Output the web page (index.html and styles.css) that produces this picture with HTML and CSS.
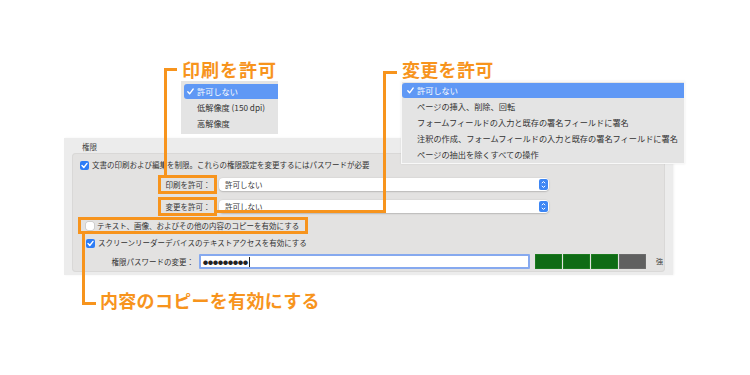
FILE: index.html
```html
<!DOCTYPE html>
<html lang="ja">
<head>
<meta charset="utf-8">
<title>権限</title>
<link rel="stylesheet" href="styles.css">
</head>
<body>
<div class="stage">
  <section class="panel">
    <div class="panel-title">権限</div>
    <div class="group">
      <div class="row row-restrict">
        <span class="cb"><svg width="9" height="9" viewBox="0 0 9 9"><rect width="9" height="9" rx="2" fill="#2c7cf6"/><path d="M2 4.6 L3.8 6.5 L7 2.4" stroke="#fff" stroke-width="1.4" fill="none" stroke-linecap="round" stroke-linejoin="round"/></svg></span>
        <span class="txt">文書の印刷および編集を制限。これらの権限設定を変更するにはパスワードが必要</span>
      </div>
      <div class="row row-print">
        <span class="field-label hl">印刷を許可：</span>
        <div class="select"><span>許可しない</span><svg class="stepper" width="9" height="11" viewBox="0 0 9 11"><rect width="9" height="11" rx="2" fill="#3d86f4"/><path d="M2.8 4.2 L4.5 2.6 L6.2 4.2 M2.8 6.8 L4.5 8.4 L6.2 6.8" stroke="#fff" stroke-width="1" fill="none"/></svg></div>
      </div>
      <div class="row row-change">
        <span class="field-label hl">変更を許可：</span>
        <div class="select"><span>許可しない</span><svg class="stepper" width="9" height="11" viewBox="0 0 9 11"><rect width="9" height="11" rx="2" fill="#3d86f4"/><path d="M2.8 4.2 L4.5 2.6 L6.2 4.2 M2.8 6.8 L4.5 8.4 L6.2 6.8" stroke="#fff" stroke-width="1" fill="none"/></svg></div>
      </div>
      <div class="row row-copy">
        <span class="copy-opt hl">
          <span class="cb cb-off"></span>
          <span class="txt">テキスト、画像、およびその他の内容のコピーを有効にする</span>
        </span>
      </div>
      <div class="row row-reader">
        <span class="cb"><svg width="9" height="9" viewBox="0 0 9 9"><rect width="9" height="9" rx="2" fill="#2c7cf6"/><path d="M2 4.6 L3.8 6.5 L7 2.4" stroke="#fff" stroke-width="1.4" fill="none" stroke-linecap="round" stroke-linejoin="round"/></svg></span>
        <span class="txt">スクリーンリーダーデバイスのテキストアクセスを有効にする</span>
      </div>
      <div class="row row-pass">
        <span class="pass-label">権限パスワードの変更：</span>
        <div class="pass-input"><span class="dots">●●●●●●●●●</span><span class="caret"></span></div>
        <div class="meter">
          <span class="bar on"></span><span class="bar on"></span><span class="bar on"></span><span class="bar off"></span>
        </div>
        <span class="strength">強</span>
      </div>
    </div>
  </section>

  <div class="menu menu-print">
    <div class="mi sel"><svg class="chk" width="7" height="7" viewBox="0 0 7 7"><path d="M0.8 3.8 L2.6 5.8 L6.2 1" stroke="#fff" stroke-width="1.3" fill="none" stroke-linecap="round" stroke-linejoin="round"/></svg>許可しない</div>
    <div class="mi">低解像度 (150 dpi)</div>
    <div class="mi">高解像度</div>
  </div>

  <div class="menu menu-change">
    <div class="mi sel"><svg class="chk" width="7" height="7" viewBox="0 0 7 7"><path d="M0.8 3.8 L2.6 5.8 L6.2 1" stroke="#fff" stroke-width="1.3" fill="none" stroke-linecap="round" stroke-linejoin="round"/></svg>許可しない</div>
    <div class="mi">ページの挿入、削除、回転</div>
    <div class="mi">フォームフィールドの入力と既存の署名フィールドに署名</div>
    <div class="mi">注釈の作成、フォームフィールドの入力と既存の署名フィールドに署名</div>
    <div class="mi">ページの抽出を除くすべての操作</div>
  </div>

  <div class="ln ln-print"></div>
  <div class="ln ln-change-top"></div>
  <div class="ln ln-change-bottom"></div>
  <div class="ln ln-copy"></div>

  <div class="callout callout-print">印刷を許可</div>
  <div class="callout callout-change">変更を許可</div>
  <div class="callout callout-copy">内容のコピーを有効にする</div>
</div>
</body>
</html>
```

FILE: styles.css
```css
* { box-sizing: border-box; }
html, body { margin: 0; padding: 0; background: #fff; }
body {
  font-family: "Noto Sans CJK JP", "Noto Sans", sans-serif;
  color: #333;
}
.stage {
  position: relative;
  width: 750px;
  height: 375px;
  overflow: hidden;
  padding: 138px 0 0 64px;
}

/* panel */
.panel {
  width: 609px;
  height: 137px;
  background: #ececec;
  padding: 0 8px 3px 8px;
  box-shadow: 1px 0 2px rgba(0,0,0,0.06);
}
.panel-title {
  height: 15px;
  padding: 3px 0 0 10px;
  font-size: 7.5px;
  line-height: 12px;
  color: #444;
}
.group {
  height: 119px;
  background: #e3e2e1;
  border-radius: 4px;
  box-shadow: inset 0 0 0 1px #d9d8d7;
  display: flex;
  flex-direction: column;
}
.row {
  display: flex;
  align-items: center;
  font-size: 7.5px;
  white-space: nowrap;
}
.txt { line-height: 1; }
.cb {
  width: 9px;
  height: 9px;
  display: inline-flex;
  flex: none;
}
.cb-off {
  background: #fff;
  border-radius: 2px;
  box-shadow: 0 0 0 0.5px #bbb;
}
.row-restrict { margin-top: 5px; height: 14px; padding-left: 8px; }
.row-restrict .cb { margin-right: 3px; }

.row-print { margin-top: 6px; height: 13px; padding-left: 89px; }
.row-change { margin-top: 9px; height: 13px; padding-left: 89px; }
.field-label {
  width: 53px;
  height: 13px;
  line-height: 13px;
  text-align: center;
  padding-left: 1px;
}
.hl { outline: 3px solid #f7941d; }
.select {
  margin-left: 5px;
  width: 330px;
  height: 13px;
  background: #fff;
  border-radius: 4px;
  box-shadow: 0 0.5px 1.5px rgba(0,0,0,0.3);
  display: flex;
  align-items: center;
  justify-content: space-between;
  padding: 0 1px 0 6px;
}
.select span { line-height: 1; }

.row-copy { margin-top: 7px; height: 11px; padding-left: 9px; }
.copy-opt {
  display: flex;
  align-items: center;
  height: 11px;
  width: 224px;
  padding-left: 5px;
}
.copy-opt .cb { width: 8px; height: 8px; margin-right: 3px; }

.row-reader { margin-top: 5px; height: 14px; padding-left: 14px; }
.row-reader .cb { margin-right: 3px; }

.row-pass { margin-top: 4px; height: 15px; padding-left: 39px; }
.pass-label { width: 83px; text-align: right; line-height: 1; }
.pass-input {
  margin-left: 5px;
  width: 331px;
  height: 15px;
  background: #fff;
  border: 2px solid #86a9ef;
  border-radius: 1px;
  display: flex;
  align-items: center;
  padding-left: 2px;
}
.dots { font-size: 5px; line-height: 1; color: #222; letter-spacing: 0; }
.caret { width: 1px; height: 10px; background: #222; margin-left: 0.5px; }
.meter { margin-left: 5px; display: flex; gap: 1px; }
.bar { width: 27px; height: 15px; }
.bar.on { background: #0f6b15; box-shadow: inset 0 0 0 0.5px #2a8a2a; }
.bar.off { background: #606060; box-shadow: inset 0 0 0 0.5px #777; }
.strength { margin-left: 10px; font-size: 7px; line-height: 1; }

/* dropdown menus (overlays) */
.menu {
  position: absolute;
  background: #e4e4e4;
  font-size: 8.2px;
  color: #333;
  white-space: nowrap;
}
.mi {
  position: relative;
  height: 16px;
  line-height: 16px;
}
.mi.sel {
  height: 15px;
  line-height: 15px;
  background: #5f98f5;
  color: #fff;
  border-radius: 3px 0 0 3px;
}
.chk {
  position: absolute;
  top: 4px;
}
.menu-print {
  left: 181px;
  top: 81px;
  width: 97px;
  height: 53px;
  padding: 3px 0 0 3px;
}
.menu-print .mi { padding-left: 13px; }
.menu-print .chk { left: 3px; }
.menu-change {
  left: 401px;
  top: 81px;
  width: 284px;
  height: 83px;
  padding-top: 1px;
  border: 1px solid #f8f8f8;
  box-shadow: 0 0 2px rgba(0,0,0,0.08);
}
.menu-change .mi { padding-left: 15px; }
.menu-change .chk { left: 5px; }

/* annotation lines */
.ln {
  position: absolute;
  border: 0 solid #f7941d;
}
.ln-print { left: 164px; top: 68px; width: 13px; height: 107px; border-left-width: 3px; border-top-width: 3px; }
.ln-change-top { left: 383px; top: 71px; width: 14px; height: 10px; border-left-width: 3px; border-top-width: 3px; }
.ln-change-bottom { left: 216px; top: 80px; width: 170px; height: 133px; border-right-width: 3px; border-bottom-width: 3px; }
.ln-copy { left: 82px; top: 234px; width: 14px; height: 71px; border-left-width: 3px; border-bottom-width: 3px; }

.callout {
  position: absolute;
  font-family: "Noto Sans CJK JP", sans-serif;
  font-weight: 700;
  font-size: 18px;
  line-height: 1;
  color: #f7941d;
  white-space: nowrap;
}
.callout-print { left: 182px; top: 60px; letter-spacing: 1px; }
.callout-change { left: 402px; top: 60px; letter-spacing: 0.3px; }
.callout-copy { left: 100px; top: 291px; letter-spacing: 0.3px; }
```
